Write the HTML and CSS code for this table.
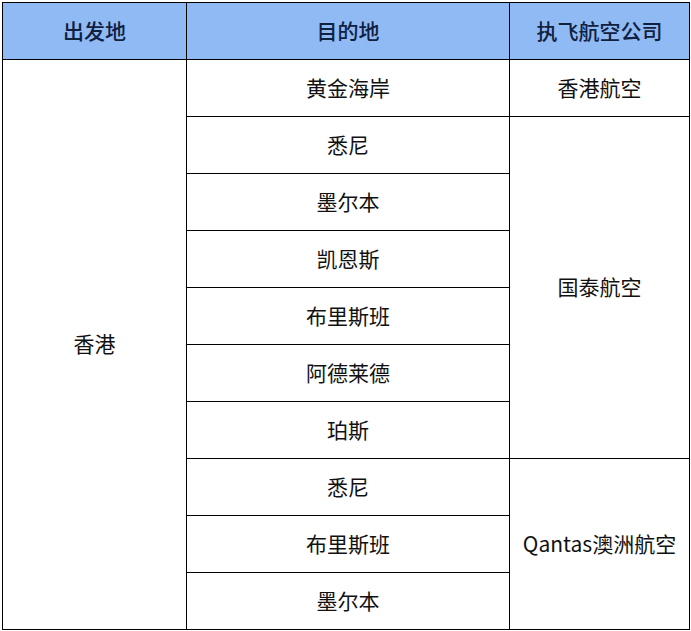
FILE: index.html
```html
<!DOCTYPE html>
<html lang="zh-CN">
<head>
<meta charset="utf-8">
<link rel="stylesheet" href="styles.css">
</head>
<body>
<table class="routes">
  <colgroup>
    <col class="c1"><col class="c2"><col class="c3">
  </colgroup>
  <thead>
    <tr><th>出发地</th><th>目的地</th><th>执飞航空公司</th></tr>
  </thead>
  <tbody>
    <tr><td rowspan="10">香港</td><td>黄金海岸</td><td>香港航空</td></tr>
    <tr><td>悉尼</td><td rowspan="6">国泰航空</td></tr>
    <tr><td>墨尔本</td></tr>
    <tr><td>凯恩斯</td></tr>
    <tr><td>布里斯班</td></tr>
    <tr><td>阿德莱德</td></tr>
    <tr><td>珀斯</td></tr>
    <tr><td>悉尼</td><td rowspan="3">Qantas澳洲航空</td></tr>
    <tr><td>布里斯班</td></tr>
    <tr><td>墨尔本</td></tr>
  </tbody>
</table>
</body>
</html>
```

FILE: styles.css
```css
html, body {
  margin: 0;
  padding: 0;
  background: #ffffff;
}
body {
  padding: 2px 0 0 2px;
  font-family: "Noto Sans CJK SC", "Noto Sans", sans-serif;
}
.routes {
  border-collapse: collapse;
  table-layout: fixed;
  width: 687px;
}
.c1 { width: 184px; }
.c2 { width: 323px; }
.c3 { width: 180px; }
.routes th,
.routes td {
  border: 1px solid #000;
  height: 53px;
  padding: 0 0 3px 0;
  text-align: center;
  vertical-align: middle;
  font-size: 21px;
  line-height: 24px;
}
.routes th {
  background: #8fbaf3;
  color: #10203f;
  font-weight: 500;
}
.routes td {
  color: #111;
  font-weight: 400;
}
```
